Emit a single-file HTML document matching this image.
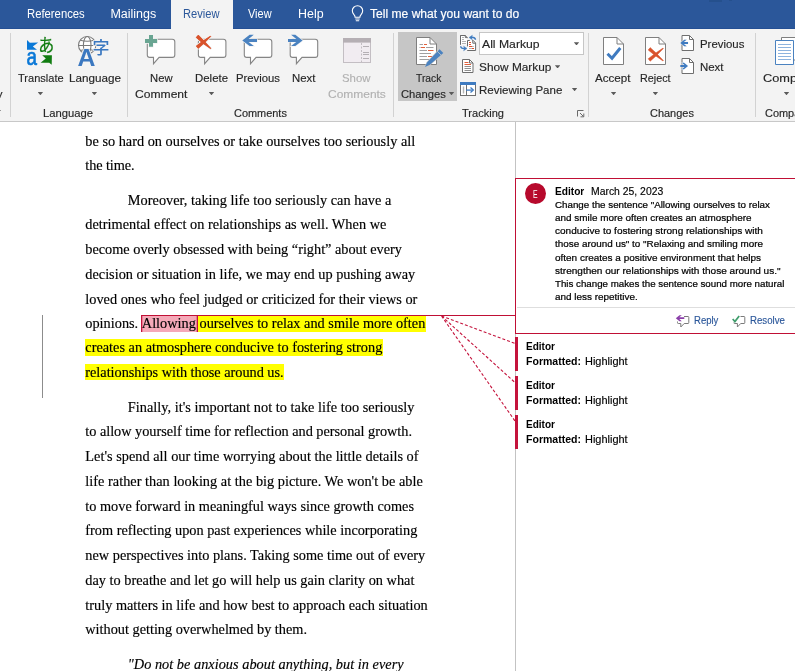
<!DOCTYPE html>
<html lang="en">
<head>
<meta charset="utf-8">
<title>Document - Word</title>
<style>
html,body{margin:0;padding:0;}
body{width:795px;height:671px;overflow:hidden;position:relative;background:#fff;font-family:"Liberation Sans",sans-serif;color:#262626;}
#app{position:absolute;left:0;top:0;width:795px;height:671px;overflow:hidden;will-change:transform;}
.t{position:absolute;white-space:nowrap;line-height:20px;transform-origin:0 0;}
.rib,.doc{-webkit-text-stroke:.15px;}
.doc{font-family:"Liberation Serif",serif;}
.body{-webkit-text-stroke:.22px #000;}
.thin{-webkit-text-stroke:.15px;}
#tabs{position:absolute;left:0;top:0;width:795px;height:29px;background:#2b579a;box-shadow:inset 0 -1px 0 #244f94;}
#tabs .active{position:absolute;left:171px;top:0;width:62px;height:29px;background:#f3f3f3;}
#ribbon{position:absolute;left:0;top:29px;width:795px;height:92px;background:#f3f3f3;border-bottom:1px solid #c8c8c8;}
.sep{position:absolute;top:33px;width:1px;height:84px;background:#d2d2d2;}
.pressed{position:absolute;left:398px;top:32px;width:59px;height:69px;background:#c6c6c6;}
.combo{position:absolute;left:479px;top:32px;width:103px;height:21px;background:#fff;border:1px solid #c6c6c6;}
.ic{position:absolute;overflow:visible;}
.arr{position:absolute;width:5.4px;height:3.2px;background:#5a5a5a;clip-path:polygon(0 0,100% 0,50% 100%);}
#doc{position:absolute;left:0;top:122px;width:795px;height:549px;background:#fff;}
.vline{position:absolute;left:515px;top:122px;width:1px;height:549px;background:#c3c3c3;}
.chgbar{position:absolute;left:42px;top:315px;width:1px;height:83px;background:#8c8c8c;}
.hl{background:#ffff00;padding:0 .4px .5px 0;margin-right:-.4px;}
.pk{background:#f5a9b8;padding:0 2px .5px 1px;margin:0 -2px 0 -1px;position:relative;z-index:1;box-shadow:inset 1.3px 0 0 #c4133c, inset -1.3px 0 0 #c4133c;}
.cbox{position:absolute;left:515px;top:178px;width:290px;height:154px;border:1px solid #c00f35;background:#fff;}
.cbox .rule{position:absolute;left:1px;right:0;top:128px;height:1px;background:#dedede;}
.avatar{position:absolute;left:525px;top:183px;width:21px;height:21px;border-radius:50%;background:#b7092c;}
.bar{position:absolute;left:515px;width:2.5px;height:34.5px;background:#c4133c;}
</style>
</head>
<body>
<div id="app">
<!-- ================= TAB BAR ================= -->
<div id="tabs">
  <div class="active"></div>
  <div style="position:absolute;left:709px;top:0;width:13px;height:2px;background:#25508d"></div>
  <div style="position:absolute;left:729px;top:0;width:3px;height:1px;background:#25508d"></div>
  <svg class="ic" style="left:350px;top:4px" width="15" height="19" viewBox="0 0 15 19" fill="none" stroke="#fff" stroke-width="1.1">
    <path d="M7.5 1.8c-3 0-5.2 2.2-5.2 5 0 1.8.9 3 1.8 4 .7.8 1 1.500 1 2.400h4.800c0-.9.300-1.600 1-2.400.9-1 1.800-2.200 1.800-4 0-2.800-2.200-5-5.200-5z"/>
    <path d="M5.300 15h4.400M5.800 16.800h3.400"/>
  </svg>
<span class="t tab" style="left:26.50px;top:4.00px;font-size:12.5px;color:#ffffff;transform:scaleX(0.9031);">References</span>
<span class="t tab" style="left:110.40px;top:4.00px;font-size:12.5px;color:#ffffff;transform:scaleX(1.0000);">Mailings</span>
<span class="t tab" style="left:182.71px;top:4.00px;font-size:12.5px;color:#2b579a;transform:scaleX(0.8912);">Review</span>
<span class="t tab" style="left:247.60px;top:4.00px;font-size:12.5px;color:#ffffff;transform:scaleX(0.8764);">View</span>
<span class="t tab" style="left:298.01px;top:4.00px;font-size:12.5px;color:#ffffff;transform:scaleX(0.9937);">Help</span>
<span class="t tab" style="left:369.60px;top:4.00px;font-size:12.5px;color:#ffffff;transform:scaleX(0.9670);-webkit-text-stroke:.18px #fff;">Tell me what you want to do</span>
</div>

<!-- ================= RIBBON ================= -->
<div id="ribbon"></div>
<div class="sep" style="left:10px"></div>
<div class="sep" style="left:127px"></div>
<div class="sep" style="left:393px"></div>
<div class="sep" style="left:588px"></div>
<div class="sep" style="left:755px"></div>
<div class="pressed"></div>
<div class="combo"></div>
<svg class="ic" style="left:0;top:0" width="795" height="122" viewBox="0 0 795 122">

  <!-- Translate -->
  <g>
    <path d="M27 40.100V49.800H37L32.800 46.400L38.200 42.400L29.800 42.800z" fill="#0a78d7"/>
    <text transform="translate(26.400 65) scale(.8 1)" font-family="Liberation Sans, sans-serif" font-size="23.500" fill="#0a78d7" stroke="#0a78d7" stroke-width=".700">a</text>
    <text transform="translate(38.200 52.200) scale(.88 1)" font-family="Liberation Sans, Noto Sans CJK JP, sans-serif" font-weight="400" font-size="18.200" fill="#107c10" stroke="#107c10" stroke-width=".250">あ</text>
    <path d="M51.900 55.300H42.200L45.800 58.600L40.600 62.700H49.200L51.700 64.800z" fill="#107c10"/>
  </g>

  <!-- Language -->
  <g>
    <g fill="none" stroke="#7b7b7b" stroke-width="1.100">
      <circle cx="87.200" cy="45.200" r="8.700" fill="#fff"/>
      <ellipse cx="87.200" cy="45.200" rx="3.800" ry="8.700"/>
      <path d="M78.500 45.500H95.900M80.300 40.300Q87.200 42.300 94.100 40.300M80.300 50.500Q87.200 48.500 94.100 50.500"/>
    </g>
    <text x="77.500" y="65.800" font-family="Liberation Sans, sans-serif" font-weight="bold" font-size="24.800" fill="#3b78c0" stroke="#f3f3f3" stroke-width="1.600" paint-order="stroke">A</text>
    <text x="92.400" y="54.300" font-family="Liberation Sans, Noto Sans CJK JP, sans-serif" font-weight="500" font-size="17" fill="#3b78c0" stroke="#f3f3f3" stroke-width="1.500" paint-order="stroke">字</text>
  </g>

  <!-- New Comment -->
  <g>
    <path transform="translate(147.300 39.300)" d="M2.500 0H25a2.500 2.500 0 0 1 2.500 2.500V15.600a2.500 2.500 0 0 1-2.500 2.500H11.800L6.200 24.400V18.100H2.500A2.500 2.500 0 0 1 0 15.600V2.500A2.500 2.500 0 0 1 2.500 0z" fill="#fff" stroke="#858585" stroke-width="1.100"/>
    <path d="M143.500 33.500H158.500V48.500H143.500z" fill="#f3f3f3" opacity="0"/>
    <path d="M149 35h4v4h4.100v4H153v3.800h-4V43h-4v-4h4z" fill="#69a592" stroke="#f3f3f3" stroke-width="1.400" paint-order="stroke"/>
  </g>

  <!-- Delete -->
  <g>
    <path transform="translate(198.400 39.300)" d="M2.500 0H25a2.500 2.500 0 0 1 2.500 2.500V15.600a2.500 2.500 0 0 1-2.500 2.500H11.800L6.200 24.400V18.100H2.500A2.500 2.500 0 0 1 0 15.600V2.500A2.500 2.500 0 0 1 2.500 0z" fill="#fff" stroke="#858585" stroke-width="1.100"/>
    <path d="M198.300 35L204.200 41L210.900 48.300L210.500 48.700L202.400 43L196.100 37.400zM196.200 46.100L202.400 41.350L210.400 36.100L210.800 36.500L204 43.350L198.200 48.500z" fill="#d9532c" stroke="#f3f3f3" stroke-width="2" stroke-linejoin="round" paint-order="stroke"/>
    <path d="M198.300 35L204.200 41L210.900 48.300L210.500 48.700L202.400 43L196.100 37.400zM196.200 46.100L202.400 41.350L210.400 36.100L210.800 36.500L204 43.350L198.200 48.500z" fill="#d9532c" stroke="#d9532c" stroke-width=".500" stroke-linejoin="round"/>
  </g>

  <!-- Previous comment -->
  <g>
    <path transform="translate(244.300 39.300)" d="M2.500 0H25a2.500 2.500 0 0 1 2.500 2.500V15.600a2.500 2.500 0 0 1-2.500 2.500H11.800L6.200 24.400V18.100H2.500A2.500 2.500 0 0 1 0 15.600V2.500A2.500 2.500 0 0 1 2.500 0z" fill="#fff" stroke="#858585" stroke-width="1.100"/>
    <path d="M242.300 40.400L249.600 34.800H253.800L248.600 39H257V41.900H248.600L253.800 46.100H249.600z" fill="#4a82c0" stroke="#f3f3f3" stroke-width="1.200" paint-order="stroke"/>
  </g>

  <!-- Next comment -->
  <g>
    <path transform="translate(290.200 39.300)" d="M2.500 0H25a2.500 2.500 0 0 1 2.500 2.500V15.600a2.500 2.500 0 0 1-2.500 2.500H11.800L6.200 24.400V18.100H2.500A2.500 2.500 0 0 1 0 15.600V2.500A2.500 2.500 0 0 1 2.500 0z" fill="#fff" stroke="#858585" stroke-width="1.100"/>
    <path d="M302.600 40.400L295.300 34.800H291.100L296.300 39H288V41.900H296.300L291.100 46.100H295.300z" fill="#4a82c0" stroke="#f3f3f3" stroke-width="1.200" paint-order="stroke"/>
  </g>

  <!-- Show Comments (disabled) -->
  <g>
    <rect x="343.500" y="38.500" width="27" height="24" fill="#f1ecf1" stroke="#c3bec3" stroke-width="1"/>
    <rect x="343" y="38" width="28" height="4.600" fill="#b5afb4"/>
    <path d="M361.500 43V62" stroke="#c3bec3" stroke-width="1" stroke-dasharray="2 1.500"/>
    <path d="M363 46.500H369M363 52.500H369M363 54.500H369M363 58.500H369" stroke="#b5b0b5" stroke-width="1"/>
  </g>

  <!-- Track Changes -->
  <g>
    <path transform="translate(416.500 37.500)" d="M0 0H13.500L20 6.500V27H0z" fill="#fff" stroke="#7f7f7f" stroke-width="1"/>
    <path d="M430 37.500V44H436.500" fill="none" stroke="#7f7f7f" stroke-width="1"/>
    <path d="M419.500 44.500H423M419.500 47.500H420.500M426 47.500H433.500M419.500 50.500H427M419.500 53.500H431M419.500 56.500H427M419.500 59.500H429" stroke="#a0a0a0" stroke-width="1"/>
    <path d="M424 44.500H427M421 47.500H425M428 50.500H433.500M428 56.500H432" stroke="#e0603c" stroke-width="1.200"/>
    <path d="M439.600 49.200L443.300 52.900L429.500 65L425 67L427.200 62.300z" fill="#4a82c0" stroke="#c6c6c6" stroke-width="1.200" paint-order="stroke"/>
    <path d="M437.200 51.200L441 55" stroke="#c6c6c6" stroke-width=".800"/>
  </g>

  <!-- Display for review icon -->
  <g fill="none" stroke-width="1">
    <path d="M460.500 44.500V35.500H465.500L467.200 37.200V38.200" fill="#fff" stroke="#6f6f6f"/>
    <path d="M460.500 44.500V35.500H465.300L467.200 37.400V40H467V44.500z" fill="#fff" stroke="none"/>
    <path d="M460.500 44.700V35.500H465.300M465.300 35.500V37.600H467.300" stroke="#6a6a6a"/>
    <path d="M462 37.500H464M462 39.500H464M462 41.500H466M462 43.500H466" stroke="#b4b4b4"/>
    <path d="M467.500 40.500H475.600V50.500H467.500z" fill="#fff" stroke="none"/>
    <path d="M467.500 46.400V40.500H469.800M472.300 40.500H473.300L475.600 43V50.500H467.200" stroke="#6a6a6a"/>
    <path d="M472.800 40.700V43.200H475.400" stroke="#6a6a6a"/>
    <path d="M469 42.500H471M469 44.500H471M469 46.500H472M472 48.500H474" stroke="#e0542f" stroke-width="1.100"/>
    <path d="M472 46.500H473.800M469 48.500H472" stroke="#b4b4b4"/>
    <path d="M470.500 37.500Q475.200 36.800 475.500 39.800" stroke="#3f7bc0" stroke-width="1.500"/>
    <path d="M472.400 35.200L469 37.500L472.400 39.800L471.500 37.500z" fill="#3f7bc0" stroke="#3f7bc0" stroke-width=".400" stroke-linejoin="round"/>
    <path d="M460.700 46.300Q460.900 48.900 465 48.500" stroke="#3f7bc0" stroke-width="1.500"/>
    <path d="M463.600 46.200L467 48.500L463.600 50.800L464.500 48.500z" fill="#3f7bc0" stroke="#3f7bc0" stroke-width=".400" stroke-linejoin="round"/>
  </g>

  <!-- Show Markup icon -->
  <g>
    <path d="M462.500 59.500H469.500L473 63V72.500H462.500z" fill="#fff" stroke="#6f6f6f" stroke-width="1"/>
    <path d="M469.500 59.500V63H473" fill="none" stroke="#6f6f6f" stroke-width="1"/>
    <path d="M464.500 62.500H468.500M464.500 64.500H471" stroke="#e0603c" stroke-width="1"/>
    <path d="M464.500 66.500H471M464.500 68.500H471M464.500 70.500H471" stroke="#8f8f8f" stroke-width="1"/>
  </g>

  <!-- Reviewing pane icon -->
  <g>
    <rect x="460.500" y="84.500" width="15" height="11" fill="#fff" stroke="#6f6f6f" stroke-width="1"/>
    <rect x="460" y="82" width="16" height="3" fill="#3f7bc0"/>
    <path d="M466.500 85V95.500" stroke="#6f6f6f" stroke-width="1"/>
    <path d="M463.500 86.500V93.500" stroke="#b5b5b5" stroke-width="1.400"/>
    <path d="M466 90.100H472.500" stroke="#3f7bc0" stroke-width="1.300"/>
    <path d="M470.500 87.600L473.300 90.100L470.500 92.600" fill="none" stroke="#3f7bc0" stroke-width="1.300"/>
  </g>

  <!-- dialog launcher -->
  <g fill="none" stroke="#6a6a6a" stroke-width="1">
    <path d="M583.500 110.500H577.500V116.500"/>
    <path d="M580 113L583.500 116.500M583.800 113.500V116.800H580.500"/>
  </g>

  <!-- Accept -->
  <g>
    <path transform="translate(603.500 37.500)" d="M0 0H13.500L20 6.500V27H0z" fill="#fff" stroke="#7f7f7f" stroke-width="1"/>
    <path d="M617 37.500V44H623.500" fill="none" stroke="#7f7f7f" stroke-width="1"/>
    <path d="M607.500 53.800L612 58.200L620.300 48" fill="none" stroke="#3f7bc0" stroke-width="3"/>
  </g>

  <!-- Reject -->
  <g>
    <path transform="translate(645.500 37.500)" d="M0 0H13.500L20 6.500V27H0z" fill="#fff" stroke="#7f7f7f" stroke-width="1"/>
    <path d="M659 37.500V44H665.500" fill="none" stroke="#7f7f7f" stroke-width="1"/>
    <path d="M650.200 47.600L656.350 53.200L663.400 60.600L663 61L654.650 55.200L648.200 50zM648.200 58.800L654.700 53.700L663 48.100L663.400 48.500L656.300 55.700L650.200 61.200z" fill="#d9532c" stroke="#d9532c" stroke-width=".500" stroke-linejoin="round"/>
  </g>

  <!-- Previous change -->
  <g>
    <path transform="translate(682 35.500)" d="M0 0H7.500L11.500 4V15H0z" fill="#fff" stroke="#6f6f6f" stroke-width="1"/>
    <path d="M689.500 35.500V39.500H693.500" fill="none" stroke="#6f6f6f" stroke-width="1"/>
    <path d="M680.300 43L684.300 39.800H686.600L683.800 42.100H688V43.900H683.800L686.600 46.200H684.300z" fill="#3f7bc0" stroke="#f3f3f3" stroke-width="1" paint-order="stroke"/>
  </g>
  <!-- Next change -->
  <g>
    <path transform="translate(682 58.500)" d="M0 0H7.500L11.500 4V15H0z" fill="#fff" stroke="#6f6f6f" stroke-width="1"/>
    <path d="M689.500 58.500V62.500H693.500" fill="none" stroke="#6f6f6f" stroke-width="1"/>
    <path d="M688 66L684 62.800H681.700L684.500 65.100H680.300V66.900H684.500L681.700 69.200H684z" fill="#3f7bc0" stroke="#f3f3f3" stroke-width="1" paint-order="stroke"/>
  </g>

  <!-- Compare -->
  <g>
    <path d="M781.500 37.500H796V60H781.500z" fill="#fff" stroke="#7f7f7f" stroke-width="1"/>
    <path d="M775.500 40.500H793.500V64.500H775.500z" fill="#fff" stroke="#4a82c0" stroke-width="1"/>
    <path d="M778 44.500H791M778 47.500H791M778 50.500H791M778 53.500H791M778 56.500H791M778 59.500H791" stroke="#8db3de" stroke-width="1"/>
  </g>
</svg>
<!-- dropdown arrows -->
<div class="arr" style="left:-4.400px;top:110px"></div>
<div class="arr" style="left:37.700px;top:92px"></div>
<div class="arr" style="left:91.700px;top:92px"></div>
<div class="arr" style="left:208.800px;top:92px"></div>
<div class="arr" style="left:448.800px;top:92px"></div>
<div class="arr" style="left:573.800px;top:42.200px"></div>
<div class="arr" style="left:554.900px;top:65.300px"></div>
<div class="arr" style="left:571.900px;top:88px"></div>
<div class="arr" style="left:610.900px;top:92px"></div>
<div class="arr" style="left:652.700px;top:92px"></div>
<div class="arr" style="left:783.800px;top:92px"></div>

<span class="t rib" style="left:-3.20px;top:83.60px;font-size:11.5px;transform:scaleX(1.0000);">y</span>
<span class="t rib" style="left:17.50px;top:67.70px;font-size:11.5px;transform:scaleX(0.9594);">Translate</span>
<span class="t rib" style="left:68.70px;top:67.70px;font-size:11.5px;transform:scaleX(1.0144);">Language</span>
<span class="t rib" style="left:43.30px;top:102.70px;font-size:10.5px;transform:scaleX(1.0709);">Language</span>
<span class="t rib" style="left:149.60px;top:67.70px;font-size:11.5px;transform:scaleX(0.9789);">New</span>
<span class="t rib" style="left:134.60px;top:83.60px;font-size:11.5px;transform:scaleX(1.0523);">Comment</span>
<span class="t rib" style="left:195.40px;top:67.70px;font-size:11.5px;transform:scaleX(0.9925);">Delete</span>
<span class="t rib" style="left:235.60px;top:67.70px;font-size:11.5px;transform:scaleX(0.9824);">Previous</span>
<span class="t rib" style="left:291.50px;top:67.70px;font-size:11.5px;transform:scaleX(0.9897);">Next</span>
<span class="t rib" style="left:342.00px;top:67.70px;font-size:11.5px;color:#b1b1b1;transform:scaleX(0.9877);">Show</span>
<span class="t rib" style="left:327.50px;top:83.60px;font-size:11.5px;color:#b1b1b1;transform:scaleX(1.0404);">Comments</span>
<span class="t rib" style="left:233.70px;top:102.70px;font-size:10.5px;transform:scaleX(1.0413);">Comments</span>
<span class="t rib" style="left:415.60px;top:67.70px;font-size:11.5px;transform:scaleX(0.8924);">Track</span>
<span class="t rib" style="left:400.70px;top:83.60px;font-size:11.5px;transform:scaleX(0.9766);">Changes</span>
<span class="t rib" style="left:482.40px;top:33.80px;font-size:11.5px;transform:scaleX(1.0607);">All Markup</span>
<span class="t rib" style="left:479.40px;top:56.50px;font-size:11.5px;transform:scaleX(1.0299);">Show Markup</span>
<span class="t rib" style="left:479.40px;top:79.60px;font-size:11.5px;transform:scaleX(1.0023);">Reviewing Pane</span>
<span class="t rib" style="left:461.50px;top:102.70px;font-size:10.5px;transform:scaleX(1.0541);">Tracking</span>
<span class="t rib" style="left:595.40px;top:67.70px;font-size:11.5px;transform:scaleX(1.0094);">Accept</span>
<span class="t rib" style="left:640.40px;top:67.70px;font-size:11.5px;transform:scaleX(0.9371);">Reject</span>
<span class="t rib" style="left:699.50px;top:33.70px;font-size:11.5px;transform:scaleX(0.9913);">Previous</span>
<span class="t rib" style="left:699.50px;top:56.60px;font-size:11.5px;transform:scaleX(0.9938);">Next</span>
<span class="t rib" style="left:649.80px;top:102.70px;font-size:10.5px;transform:scaleX(1.0435);">Changes</span>
<span class="t rib" style="left:762.50px;top:67.70px;font-size:11.5px;transform:scaleX(1.1087);">Compare</span>
<span class="t rib" style="left:764.60px;top:102.70px;font-size:10.5px;transform:scaleX(1.0428);">Compare</span>

<!-- ================= DOCUMENT ================= -->
<div id="doc"></div>
<div class="vline"></div>
<div class="chgbar"></div>
<span class="t doc" style="left:85.30px;top:131.00px;font-size:14.3px;color:#000000;letter-spacing:0.006px;">be so hard on ourselves or take ourselves too seriously all</span>
<span class="t doc" style="left:85.30px;top:155.00px;font-size:14.3px;color:#000000;letter-spacing:-0.104px;">the time.</span>
<span class="t doc" style="left:127.80px;top:190.00px;font-size:14.3px;color:#000000;letter-spacing:0.028px;">Moreover, taking life too seriously can have a</span>
<span class="t doc" style="left:85.30px;top:214.00px;font-size:14.3px;color:#000000;letter-spacing:0.012px;">detrimental effect on relationships as well. When we</span>
<span class="t doc" style="left:85.30px;top:239.00px;font-size:14.3px;color:#000000;letter-spacing:-0.010px;">become overly obsessed with being “right” about every</span>
<span class="t doc" style="left:85.30px;top:263.80px;font-size:14.3px;color:#000000;letter-spacing:-0.001px;">decision or situation in life, we may end up pushing away</span>
<span class="t doc" style="left:85.30px;top:288.50px;font-size:14.3px;color:#000000;letter-spacing:0.002px;">loved ones who feel judged or criticized for their views or</span>
<span class="t doc" style="left:85.30px;top:313.00px;font-size:14.3px;color:#000000;letter-spacing:0.009px;">opinions. <span class="pk">Allowing</span><span class="hl"> ourselves to relax and smile more often</span></span>
<span class="t doc" style="left:85.30px;top:337.40px;font-size:14.3px;color:#000000;letter-spacing:0.001px;"><span class="hl">creates an atmosphere conducive to fostering strong</span></span>
<span class="t doc" style="left:85.30px;top:361.50px;font-size:14.3px;color:#000000;letter-spacing:-0.019px;"><span class="hl">relationships with those around us.</span></span>
<span class="t doc" style="left:127.80px;top:396.60px;font-size:14.3px;color:#000000;letter-spacing:0.021px;">Finally, it's important not to take life too seriously</span>
<span class="t doc" style="left:85.30px;top:421.20px;font-size:14.3px;color:#000000;letter-spacing:-0.029px;">to allow yourself time for reflection and personal growth.</span>
<span class="t doc" style="left:85.30px;top:446.00px;font-size:14.3px;color:#000000;letter-spacing:0.018px;">Let's spend all our time worrying about the little details of</span>
<span class="t doc" style="left:85.30px;top:470.60px;font-size:14.3px;color:#000000;letter-spacing:0.021px;">life rather than looking at the big picture. We won't be able</span>
<span class="t doc" style="left:85.30px;top:496.00px;font-size:14.3px;color:#000000;letter-spacing:-0.001px;">to move forward in meaningful ways since growth comes</span>
<span class="t doc" style="left:85.30px;top:520.00px;font-size:14.3px;color:#000000;letter-spacing:0.002px;">from reflecting upon past experiences while incorporating</span>
<span class="t doc" style="left:85.30px;top:544.80px;font-size:14.3px;color:#000000;letter-spacing:0.009px;">new perspectives into plans. Taking some time out of every</span>
<span class="t doc" style="left:85.30px;top:569.60px;font-size:14.3px;color:#000000;letter-spacing:0.006px;">day to breathe and let go will help us gain clarity on what</span>
<span class="t doc" style="left:85.30px;top:595.00px;font-size:14.3px;color:#000000;letter-spacing:0.004px;">truly matters in life and how best to approach each situation</span>
<span class="t doc" style="left:85.30px;top:619.00px;font-size:14.3px;color:#000000;letter-spacing:-0.008px;">without getting overwhelmed by them.</span>
<span class="t doc" style="left:127.80px;top:653.60px;font-size:14.3px;font-style:italic;color:#000000;letter-spacing:0.021px;">"Do not be anxious about anything, but in every</span>

<!-- ================= COMMENTS ================= -->
<svg class="ic" style="left:0;top:0;z-index:2" width="795" height="671" viewBox="0 0 795 671" fill="none">
  <path d="M142 315.500H515" stroke="#c00f35" stroke-width="1"/>
  <path d="M441.500 316L515 343.500M441.500 316L515 382.500M441.500 316L515 421" stroke="#c4133c" stroke-width="1.100" stroke-dasharray="3 2"/>
  <!-- reply icon -->
  <path d="M684 316.500H688a.8.8 0 0 1 .8.800V322.700a.8.8 0 0 1-.8.800H684.200L680.800 327V323.500H678.300a.8.8 0 0 1-.8-.800V321.500" stroke="#7a7a7a" stroke-width="1" fill="#fff"/>
  <path d="M675.800 318.200L679.500 315.200H681.800L679.300 317.300H684.300V319.100H679.300L681.800 321.200H679.500z" fill="#8b3fa9"/>
  <!-- resolve icon -->
  <path d="M740.500 316.500H744a.8.8 0 0 1 .8.800V322.700a.8.8 0 0 1-.8.800H740.700L737.400 327V323.500H734.600a.8.8 0 0 1-.8-.800V322.500" stroke="#7a7a7a" stroke-width="1" fill="#fff"/>
  <path d="M732.700 319L734.900 321.600L739.200 315.900" stroke="#3f9d6c" stroke-width="1.700" fill="none"/>
</svg>
<div class="cbox"><div class="rule"></div></div>
<div class="avatar"></div>
<div class="bar" style="top:336.5px"></div>
<div class="bar" style="top:375.6px"></div>
<div class="bar" style="top:414.6px"></div>
<span class="t cmt" style="left:533.20px;top:184.00px;font-size:10.5px;color:#ffffff;transform:scaleX(0.6571);">E</span>
<span class="t cmt" style="left:555.40px;top:180.80px;font-size:10.5px;font-weight:bold;color:#000000;transform:scaleX(0.9655);">Editor</span>
<span class="t cmt thin" style="left:590.60px;top:180.80px;font-size:10.5px;color:#000000;transform:scaleX(0.9901);">March 25, 2023</span>
<span class="t cmt body" style="left:555.40px;top:195.00px;font-size:9.6px;color:#000000;transform:scaleX(1.0191);">Change the sentence "Allowing ourselves to relax</span>
<span class="t cmt body" style="left:555.40px;top:208.00px;font-size:9.6px;color:#000000;transform:scaleX(1.0324);">and smile more often creates an atmosphere</span>
<span class="t cmt body" style="left:555.40px;top:221.00px;font-size:9.6px;color:#000000;transform:scaleX(1.0454);">conducive to fostering strong relationships with</span>
<span class="t cmt body" style="left:555.40px;top:234.00px;font-size:9.6px;color:#000000;transform:scaleX(1.0295);">those around us" to "Relaxing and smiling more</span>
<span class="t cmt body" style="left:555.40px;top:248.00px;font-size:9.6px;color:#000000;transform:scaleX(1.0383);">often creates a positive environment that helps</span>
<span class="t cmt body" style="left:555.40px;top:261.00px;font-size:9.6px;color:#000000;transform:scaleX(1.0457);">strengthen our relationships with those around us."</span>
<span class="t cmt body" style="left:555.40px;top:274.00px;font-size:9.6px;color:#000000;transform:scaleX(1.0142);">This change makes the sentence sound more natural</span>
<span class="t cmt body" style="left:555.40px;top:287.00px;font-size:9.6px;color:#000000;transform:scaleX(1.0337);">and less repetitive.</span>
<span class="t cmt thin" style="left:693.70px;top:310.20px;font-size:10.8px;color:#2b579a;transform:scaleX(0.8828);">Reply</span>
<span class="t cmt thin" style="left:749.70px;top:310.20px;font-size:10.8px;color:#2b579a;transform:scaleX(0.8948);">Resolve</span>
<span class="t cmt" style="left:525.80px;top:336.80px;font-size:10.3px;font-weight:bold;color:#000000;transform:scaleX(0.9752);">Editor</span>
<span class="t cmt" style="left:525.80px;top:351.80px;font-size:10.3px;font-weight:bold;color:#000000;transform:scaleX(1.0236);">Formatted:</span>
<span class="t cmt thin" style="left:584.70px;top:351.80px;font-size:10.3px;color:#000000;transform:scaleX(1.0645);">Highlight</span>
<span class="t cmt" style="left:525.80px;top:376.00px;font-size:10.3px;font-weight:bold;color:#000000;transform:scaleX(0.9752);">Editor</span>
<span class="t cmt" style="left:525.80px;top:391.00px;font-size:10.3px;font-weight:bold;color:#000000;transform:scaleX(1.0236);">Formatted:</span>
<span class="t cmt thin" style="left:584.70px;top:391.00px;font-size:10.3px;color:#000000;transform:scaleX(1.0645);">Highlight</span>
<span class="t cmt" style="left:525.80px;top:415.40px;font-size:10.3px;font-weight:bold;color:#000000;transform:scaleX(0.9752);">Editor</span>
<span class="t cmt" style="left:525.80px;top:430.40px;font-size:10.3px;font-weight:bold;color:#000000;transform:scaleX(1.0236);">Formatted:</span>
<span class="t cmt thin" style="left:584.70px;top:430.40px;font-size:10.3px;color:#000000;transform:scaleX(1.0645);">Highlight</span>
</div>
</body>
</html>
